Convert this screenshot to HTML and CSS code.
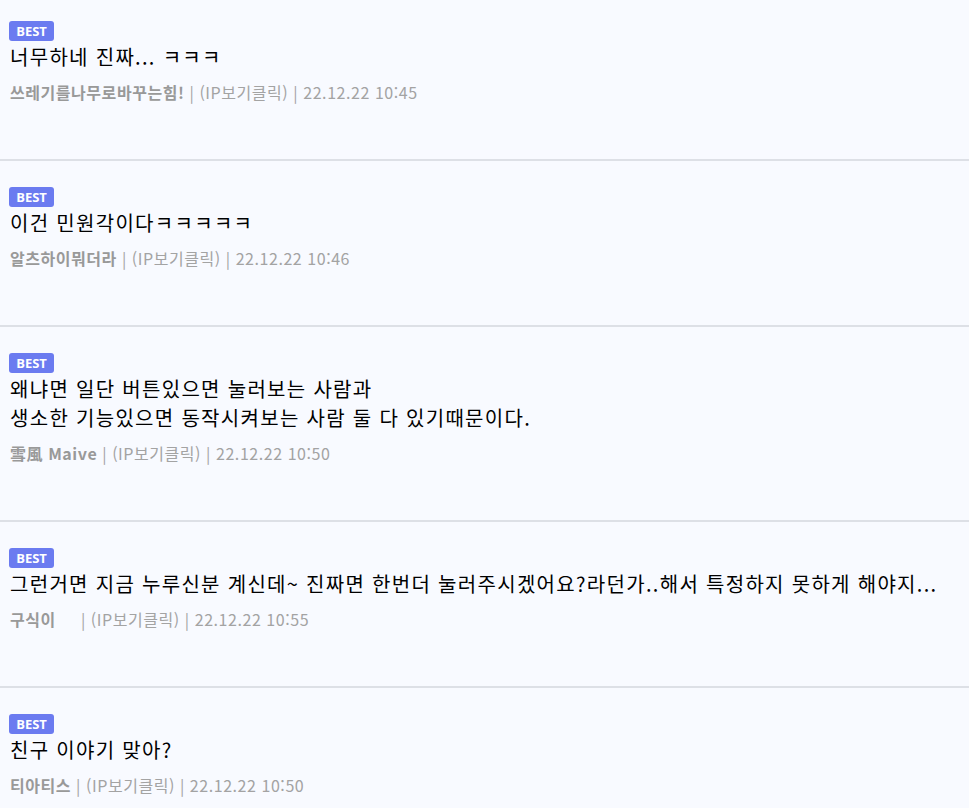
FILE: index.html
```html
<!DOCTYPE html>
<html lang="ko">
<head>
<meta charset="utf-8">
<link rel="stylesheet" href="styles.css">
</head>
<body>
<ul class="list">
  <li class="item first">
    <span class="badge">BEST</span>
    <p class="text">너무하네 진짜... ㅋㅋㅋ</p>
    <p class="meta"><b class="name">쓰레기를나무로바꾸는힘!</b> | (IP보기클릭) | 22.12.22 10:45</p>
  </li>
  <li class="item">
    <span class="badge">BEST</span>
    <p class="text">이건 민원각이다ㅋㅋㅋㅋㅋ</p>
    <p class="meta"><b class="name">알츠하이뭐더라</b> | (IP보기클릭) | 22.12.22 10:46</p>
  </li>
  <li class="item">
    <span class="badge">BEST</span>
    <p class="text">왜냐면 일단 버튼있으면 눌러보는 사람과<br>생소한 기능있으면 동작시켜보는 사람 둘 다 있기때문이다.</p>
    <p class="meta"><b class="name">雪風 Maive</b> | (IP보기클릭) | 22.12.22 10:50</p>
  </li>
  <li class="item">
    <span class="badge">BEST</span>
    <p class="text">그런거면 지금 누루신분 계신데~ 진짜면 한번더 눌러주시겠어요?라던가..해서 특정하지 못하게 해야지...</p>
    <p class="meta"><b class="name">구식이&nbsp;&nbsp;&nbsp;&nbsp;</b> | (IP보기클릭) | 22.12.22 10:55</p>
  </li>
  <li class="item">
    <span class="badge">BEST</span>
    <p class="text">친구 이야기 맞아?</p>
    <p class="meta"><b class="name">티아티스</b> | (IP보기클릭) | 22.12.22 10:50</p>
  </li>
</ul>
</body>
</html>
```
FILE: styles.css
```css
html, body {
  margin: 0;
  padding: 0;
  background: #f8faff;
}
body {
  font-family: "Noto Sans CJK KR", "Noto Sans", sans-serif;
  color: #000;
}
.list {
  list-style: none;
  margin: 0;
  padding: 0;
}
.item {
  display: flex;
  flex-direction: column;
  align-items: flex-start;
  padding: 26px 10px 57px;
  border-bottom: 2px solid #dde0e6;
}
.item.first {
  padding-top: 21px;
}
.badge {
  display: inline-flex;
  align-items: center;
  justify-content: center;
  width: 45px;
  height: 20px;
  margin-left: -1px;
  border-radius: 3px;
  background: #6b7bf0;
  color: #fff;
  font-family: "Open Sans", "Noto Sans", sans-serif;
  font-weight: 700;
  font-size: 13px;
  line-height: 1;
}
.text {
  margin: 1px 0 0;
  font-size: 20px;
  letter-spacing: 1.3px;
  line-height: 29px;
}
.meta {
  margin: 11px 0 0;
  font-size: 16px;
  letter-spacing: 0.55px;
  line-height: 20px;
  color: #a3a3a3;
}
.name {
  font-weight: 700;
  color: #999;
}
```
